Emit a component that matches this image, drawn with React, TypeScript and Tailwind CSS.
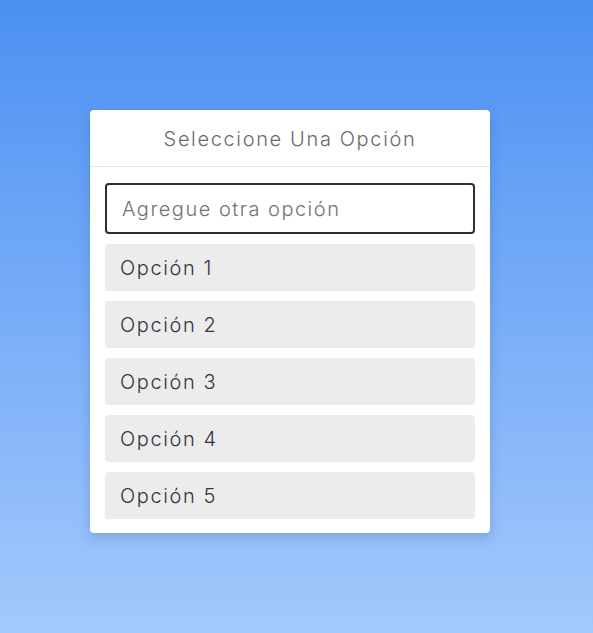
import React from "react";

export default function App() {
  const options = ["Opción 1", "Opción 2", "Opción 3", "Opción 4", "Opción 5"];
  return (
    <div
      className="min-h-screen w-full bg-gradient-to-b from-[#4b90f2] to-[#a3c9fc] pt-[110px] pl-[90px]"
      style={{ fontFamily: "Inter, 'Noto Sans', sans-serif" }}
    >
      <div className="w-[400px] bg-white rounded-[4px] shadow-[0_4px_12px_rgba(40,70,130,0.25)]">
        <div className="h-[57px] flex items-center justify-center border-b border-[#e4e4e4] text-[20px] font-light text-[#6a6a6a] tracking-[1.65px] pt-[1px]">
          Seleccione Una Opción
        </div>
        <div className="px-[15px] pt-[16px] pb-[14px] flex flex-col gap-[10px]">
          <input
            className="h-[51px] w-full border-2 border-[#2e2d3a] rounded-[4px] px-[15px] text-[20px] font-light text-[#3d3b4a] placeholder:text-[#737373] outline-none tracking-[1.5px]"
            placeholder="Agregue otra opción"
          />
          {options.map((o) => (
            <div
              key={o}
              className="h-[47px] w-full bg-[#ececec] rounded-[4px] flex items-center px-[15px] text-[20px] font-light text-[#35333f] tracking-[1.6px]"
            >
              {o}
            </div>
          ))}
        </div>
      </div>
    </div>
  );
}
